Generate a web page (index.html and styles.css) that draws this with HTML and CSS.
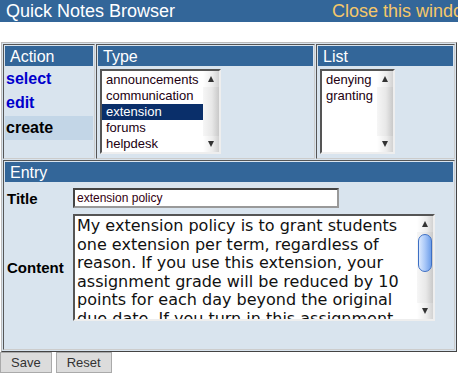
FILE: index.html
```html
<!DOCTYPE html>
<html lang="en">
<head>
  <meta charset="UTF-8" />
  <title>Quick Notes Browser</title>
  <link rel="stylesheet" href="styles.css">
</head>
<body>
  <div class="topbar">
    <span class="apptitle">Quick Notes Browser</span>
    <a class="closer" href="#">Close this window</a>
  </div>

  <table class="frame">
    <tr>
      <td class="actioncell">
        <div class="cap">Action</div>
        <a class="action" href="#">select</a>
        <a class="action" href="#">edit</a>
        <span class="action current">create</span>
      </td>
      <td class="typecell">
        <div class="cap">Type</div>
        <div class="listbox typelist">
          <div class="opts">
            <div class="opt">announcements</div>
            <div class="opt">communication</div>
            <div class="opt sel">extension</div>
            <div class="opt">forums</div>
            <div class="opt">helpdesk</div>
          </div>
          <div class="sbar">
            <div class="sbtn up"></div>
            <div class="track"></div>
            <div class="sbtn down"></div>
          </div>
        </div>
      </td>
      <td class="listcell">
        <div class="cap">List</div>
        <div class="listbox notelist">
          <div class="opts">
            <div class="opt">denying</div>
            <div class="opt">granting</div>
          </div>
          <div class="sbar">
            <div class="sbtn up"></div>
            <div class="track"></div>
            <div class="sbtn down"></div>
          </div>
        </div>
      </td>
    </tr>
    <tr>
      <td colspan="3" class="entrycell">
        <div class="cap">Entry</div>
        <div class="entry">
          <label class="lbl">Title</label>
          <input class="titlebox" type="text" value="extension policy" />
          <label class="lbl">Content</label>
          <div class="textwrap">
            <textarea class="content">My extension policy is to grant students one extension per term, regardless of reason. If you use this extension, your assignment grade will be reduced by 10 points for each day beyond the original due date. If you turn in this assignment more than a week late, it will not be accepted.</textarea>
            <div class="sbar">
              <div class="sbtn up"></div>
              <div class="track"><div class="thumb"></div></div>
              <div class="sbtn down"></div>
            </div>
          </div>
        </div>
      </td>
    </tr>
  </table>

  <div class="buttons">
    <button>Save</button>
    <button>Reset</button>
  </div>
</body>
</html>
```

FILE: styles.css
```css
body {
  margin: 0;
  font-family: "Liberation Sans", Arial, sans-serif;
  overflow: hidden;
}
.topbar {
  display: flex;
  justify-content: space-between;
  align-items: center;
  background: #336699;
  height: 22px;
  padding-left: 6px;
  white-space: nowrap;
  overflow: hidden;
}
.apptitle {
  color: white;
  font-size: 18px;
}
.closer {
  color: #f5c86a;
  font-size: 18px;
  text-decoration: none;
  margin-right: -18px;
}
.frame {
  margin: 20px 0 0 1px;
  width: 456px;
  background: #d9e4ee;
  border: 1px solid;
  border-color: #bbb #444 #444 #bbb;
  border-spacing: 1px;
}
.frame td {
  border: 1px solid;
  border-color: #555 #ccc #ccc #555;
  padding: 1px;
  vertical-align: top;
}
.actioncell { width: 88px; height: 111px; }
.typecell { width: 215px; }
.cap {
  background: #336699;
  color: white;
  font-size: 16px;
  height: 20px;
  line-height: 21px;
  padding-left: 5px;
}
.action {
  display: block;
  font-weight: bold;
  font-size: 16px;
  color: #0000cc;
  text-decoration: none;
  height: 24px;
  line-height: 24px;
  padding-left: 1px;
}
.action:first-of-type { margin-top: 1px; }
.current {
  color: black;
  background: #c3d6e7;
}

/* list boxes with a drawn scrollbar */
.listbox {
  display: flex;
  margin: 3px 0 0 2px;
  height: 81px;
  border: 2px solid;
  border-color: #555 #eee #eee #555;
  background: white;
  font-size: 13px;
}
.typelist { width: 117px; }
.notelist { width: 71px; }
.opts {
  flex: 1;
  padding-top: 1px;
}
.opt {
  height: 16px;
  line-height: 16px;
  padding-left: 4px;
  color: #220011;
  white-space: nowrap;
}
.opt.sel {
  background: #0a2f6a;
  color: white;
}
.sbar {
  width: 16px;
  display: flex;
  flex-direction: column;
  background: linear-gradient(to right, #f6f6f6, #e8e8e8 55%, #c9c9c9);
}
.sbtn {
  height: 16px;
  display: flex;
  align-items: center;
  justify-content: center;
  background: linear-gradient(to right, #ffffff, #ececec 60%, #d2d2d2);
}
.sbtn.up::before {
  content: "";
  border-left: 3px solid transparent;
  border-right: 3px solid transparent;
  border-bottom: 6px solid #333;
}
.sbtn.down::before {
  content: "";
  border-left: 3px solid transparent;
  border-right: 3px solid transparent;
  border-top: 6px solid #333;
}
.track {
  flex: 1;
  padding: 2px 1px;
}
.thumb {
  height: 36px;
  border: 1px solid #3d6fc4;
  border-radius: 7px;
  background: linear-gradient(to right, #dbe9fe, #a9c8f8 50%, #6f9fea);
}

.entrycell { height: 186px; }
.entry {
  display: grid;
  grid-template-columns: 68px auto;
  align-items: center;
  row-gap: 6px;
  padding-top: 6px;
}
.lbl {
  font-weight: bold;
  font-size: 15px;
  padding-left: 2px;
}
.titlebox {
  width: 258px;
  height: 14px;
  font-family: "Liberation Sans", Arial, sans-serif;
  font-size: 12px;
  border: 2px inset #999;
  padding: 1px 2px;
  margin: 0;
  color: #330011;
}
.textwrap {
  display: flex;
  width: 358px;
  height: 103px;
  border: 2px solid;
  border-color: #555 #eee #eee #555;
  background: white;
}
.content {
  flex: 1;
  font-family: "DejaVu Sans", Verdana, sans-serif;
  font-size: 16px;
  line-height: 18.5px;
  border: none;
  padding: 1px 2px;
  margin: 0;
  resize: none;
  overflow: hidden;
  color: #111;
}
.buttons {
  display: flex;
  gap: 4px;
}
.buttons button {
  font-family: "Liberation Sans", Arial, sans-serif;
  font-size: 13px;
  color: #333;
  background: #dcdcdc;
  border: 1px solid #aaa;
  height: 21px;
  padding: 0 10px;
}
```
